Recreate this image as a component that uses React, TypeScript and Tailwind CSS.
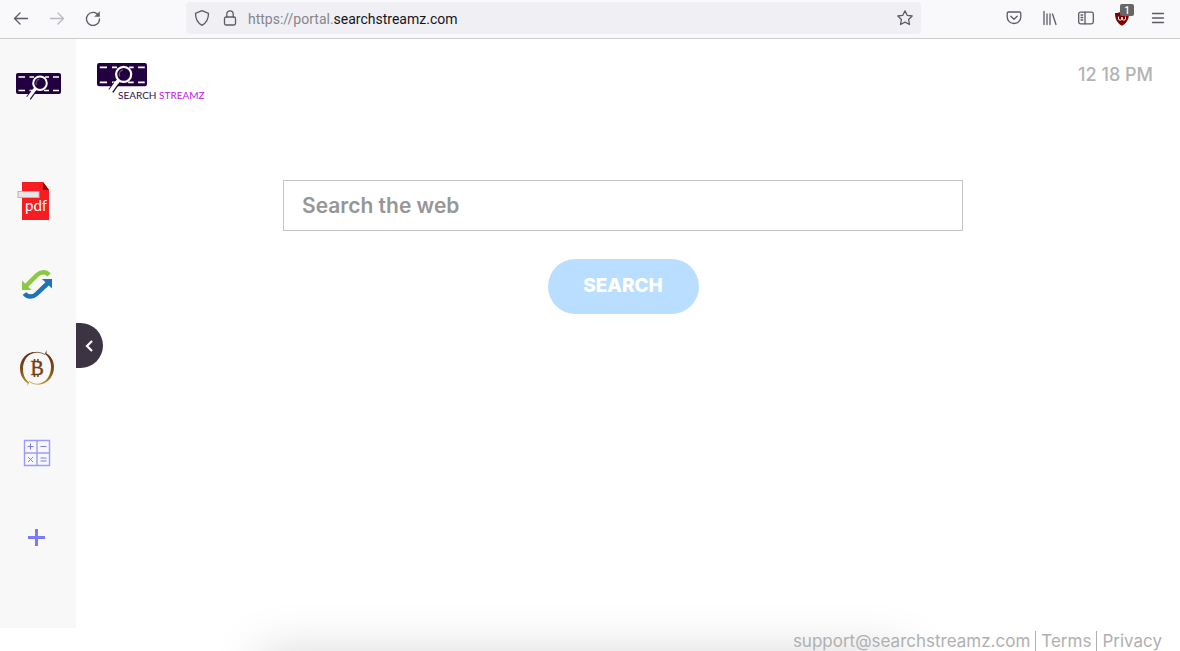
import { useState, type FormEvent, type ReactNode } from "react";

const FilmLogo = ({ className }: { className: string }) => (
  <svg viewBox="0 0 45 27" className={className} aria-hidden="true">
    <rect width="45" height="21" rx="2" fill="#22003f" />
    <path
      d="M2.5 4H9M13.5 4H18M29 4H33M37 4H43M2.5 17.5H9M13.5 17.5H17M28 17.5H33M37 17.5H43"
      stroke="#fff"
      strokeWidth="1.5"
    />
    <path d="M17 19L12.5 25.2" stroke="#22003f" strokeWidth="5.4" />
    <path d="M20.5 14.5L17.5 18L11.5 26.2" stroke="#fff" strokeWidth="3.4" fill="none" />
    <circle cx="24" cy="10.2" r="6.8" fill="#22003f" stroke="#fff" strokeWidth="2" />
    <path d="M20.3 12C19.5 9 21.2 6.8 23.3 6.2" stroke="#6d5585" strokeWidth="1.2" fill="none" />
  </svg>
);

const PdfIcon = () => (
  <svg viewBox="0 0 40 40" className="size-10">
    <path d="M5 1H26L32 9V39H5Z" fill="#f71b22" />
    <path d="M26 1V9H32Z" fill="#8f0508" />
    <rect x="1" y="10.5" width="21" height="6" fill="#e6e6e6" stroke="#d9a7aa" strokeWidth="1" />
    <text x="8" y="30" fill="#fff" fontSize="15" fontFamily="Lato, sans-serif">
      pdf
    </text>
  </svg>
);

const SyncIcon = () => (
  <svg viewBox="0 0 32 34" className="h-[34px] w-8" fill="none">
    <path d="M5 18L16 7C19.500 3.600 25 3.200 28 7" stroke="#8bc941" strokeWidth="4.500" />
    <path d="M1 12.500V22H10.500Z" fill="#8bc941" />
    <path d="M3.500 25.500C6.500 29.600 12 29.400 15.500 26L27 15" stroke="#1d72b8" strokeWidth="4.500" />
    <path d="M21 11H31V20.500Z" fill="#1d72b8" />
  </svg>
);

const BitcoinIcon = () => (
  <svg viewBox="0 0 36 40" className="h-10 w-9">
    <defs>
      <linearGradient id="gold" x1="0" y1="0" x2="0" y2="38" gradientUnits="userSpaceOnUse">
        <stop offset="0" stopColor="#5e2a0e" />
        <stop offset="0.6" stopColor="#84501a" />
        <stop offset="1" stopColor="#c9a520" />
      </linearGradient>
    </defs>
    <path
      fill="url(#gold)"
      d="M18 3C8 2 1 10 1 19C1 26 4 31 8.500 34V37L10 33.500C5.500 30 4 25 4 20C4 11 9 4 18 3ZM18 35.500C28 36 35 28 35 18C35 12 32 7 27.500 4.500V1L26 5C30 8 32 13 32 18C32 27 27 34 18 35.500Z"
    />
    <path d="M10 5.500Q18 1 26 5.500M10 32.500Q18 38 26 32.500" stroke="url(#gold)" strokeWidth="0.700" fill="none" />
    <text x="11.500" y="25.500" fontSize="20" fontFamily="Liberation Serif, serif" fill="#763c14" stroke="#763c14" strokeWidth="0.400">
      B
    </text>
    <path d="M15.500 10V13M19 10V13M15.500 25.500V28M19 25.500V28" stroke="#763c14" strokeWidth="1.500" />
  </svg>
);

const CalculatorIcon = () => (
  <svg viewBox="0 0 28 28" className="size-7" fill="none" stroke="#7c7cf0">
    <path d="M1.500 1.500H26.500V26.500H1.500ZM14 1V27M1 14H27" stroke="#9c9cf7" strokeWidth="1.400" />
    <path d="M4.500 7.500H10.500M7.500 4.500V10.500M17.500 7.500H23.500M5 18L10 23M10 18L5 23M17.500 19H23.500M17.500 22H23.500" />
  </svg>
);

const PlusIcon = () => (
  <svg viewBox="0 0 17 17" className="size-[17px]">
    <path d="M8.500 0V17M0 8.500H17" stroke="#7b7bfa" strokeWidth="3" />
  </svg>
);

const ToolButton = ({ label, children, dim }: { label: string; children: ReactNode; dim?: boolean }) => (
  <button
    type="button"
    aria-label={label}
    className={
      dim
        ? "flex size-5 items-center justify-center text-[#b9b9c0]"
        : "flex size-5 items-center justify-center text-[#5b5b66]"
    }
  >
    <svg
      viewBox="0 0 16 16"
      className="size-4"
      fill="none"
      stroke="currentColor"
      strokeWidth="1.3"
      strokeLinecap="round"
      strokeLinejoin="round"
    >
      {children}
    </svg>
  </button>
);

const BrowserBar = () => (
  <header className="flex h-[39px] items-center border-b border-[#cccccc] bg-[#f9f9fb] pr-3 pb-0.5 pl-[11px]">
    <nav className="flex w-[175px] shrink-0 gap-4">
      <ToolButton label="Back">
        <path d="M14.500 8.500H1.500M7 3L1.500 8.500L7 14" />
      </ToolButton>
      <ToolButton label="Forward" dim>
        <path d="M1.500 8.500H14.500M9 3L14.500 8.500L9 14" />
      </ToolButton>
      <ToolButton label="Reload">
        <path d="M13.500 5.500A6.500 6.500 0 1 0 14.500 9" />
        <path d="M14.500 2V6.500H10Z" fill="currentColor" strokeWidth="0.5" />
      </ToolButton>
    </nav>
    <div className="flex h-8 w-[735px] min-w-0 items-center rounded bg-[#f0f0f4] px-1.5">
      <ToolButton label="Tracking protection">
        <path d="M8 .7L14.500 3.300C14.500 9 12.500 13 8 15.300C3.500 13 1.500 9 1.500 3.300Z" />
      </ToolButton>
      <div className="ml-2 flex">
        <ToolButton label="Site information">
          <rect x="2.500" y="7" width="11" height="8" rx="1.500" />
          <path d="M4.800 7V4A3.200 3.200 0 0 1 11.200 4V7" />
        </ToolButton>
      </div>
      <p className="ml-2 min-w-0 flex-1 truncate pt-0.5 font-['Roboto',sans-serif] text-sm text-[#85858c]">
        https://portal.<span className="text-[#15141a]">searchstreamz.com</span>
      </p>
      <ToolButton label="Bookmark this page">
        <path d="M8 .9L10.200 5.300L15.200 6L11.600 9.500L12.500 14.500L8 12.200L3.500 14.500L4.400 9.500L.8 6L5.800 5.300Z" />
      </ToolButton>
    </div>
    <div className="ml-auto flex gap-4">
      <ToolButton label="Pocket">
        <path d="M2.500 2H13.500C14.300 2 14.800 2.500 14.800 3.300V7A6.800 6.500 0 0 1 1.200 7V3.300C1.200 2.500 1.700 2 2.500 2ZM4.800 6.200L8 9.200L11.200 6.200" />
      </ToolButton>
      <ToolButton label="Library">
        <path d="M2 1.500V14.500M5 4V14.500M8 4V14.500M10.500 4L14 14.500" />
      </ToolButton>
      <ToolButton label="Sidebars">
        <rect x=".7" y="2.200" width="14.600" height="11.600" rx="1.800" />
        <path d="M7 2.200V13.800M3 5H4.700M3 7.500H4.700M3 10H4.700" />
      </ToolButton>
      <div className="relative">
        <ToolButton label="uBlock Origin">
          <path d="M8 1C10 2.500 12 3 15 3C15 9 13 13 8 15.800C3 13 1 9 1 3C4 3 6 2.500 8 1Z" fill="#800000" stroke="none" />
          <path d="M4.500 7V9C4.500 10.500 8 10.500 8 9V7V9C8 10.500 11.500 10.500 11.500 9V7" stroke="#fff" strokeWidth="1" />
        </ToolButton>
        <span className="absolute -top-1 left-2 flex h-3 w-3.5 items-center justify-center rounded-xs bg-[#666666] font-['Roboto',sans-serif] text-[10px] font-medium text-white">
          1
        </span>
      </div>
      <ToolButton label="Menu">
        <path d="M2.500 3.500H13.500M2.500 8H13.500M2.500 12.500H13.500" />
      </ToolButton>
    </div>
  </header>
);

const apps = [
  { name: "PDF converter", icon: <PdfIcon /> },
  { name: "File sync", icon: <SyncIcon /> },
  { name: "Bitcoin", icon: <BitcoinIcon /> },
  { name: "Calculator", icon: <CalculatorIcon /> },
  { name: "Add app", icon: <PlusIcon /> },
];

export default function App() {
  const [query, setQuery] = useState("");
  const [open, setOpen] = useState(true);

  const handleSearch = (e: FormEvent) => {
    e.preventDefault();
  };

  return (
    <div className="relative flex min-h-screen flex-col overflow-hidden bg-white font-['Inter',sans-serif]">
      <BrowserBar />

      <div className="flex flex-1">
        {open && (
          <aside className="w-[76px] shrink-0 bg-[#f8f8f8] pt-[34px] pr-[3px]">
            <a href="#home" aria-label="Home" className="flex justify-center pl-1">
              <FilmLogo className="h-[27px] w-[45px]" />
            </a>
            <ul className="mt-[59px]">
              {apps.map((app) => (
                <li key={app.name}>
                  <a href="#app" aria-label={app.name} className="flex h-[84px] items-center justify-center">
                    {app.icon}
                  </a>
                </li>
              ))}
            </ul>
          </aside>
        )}

        <main className="relative min-w-0 flex-1 pr-2.5">
          <div className="flex items-start justify-between pt-6 pr-[17px] pl-[21px]">
            <a href="#home" className="block">
              <FilmLogo className="h-[30px] w-[50px]" />
              <span className="-mt-1 ml-[21px] block font-['Lato',sans-serif] text-[10px] leading-3 text-[#2c1250]">
                SEARCH <span className="text-[#bf16ee]">STREAMZ</span>
              </span>
            </a>
            <time className="text-lg leading-6 font-medium text-[#b3b3b3]">12 18 PM</time>
          </div>

          <form onSubmit={handleSearch} className="mx-auto mt-[79px] flex max-w-[680px] flex-col items-center gap-7">
            <input
              type="text"
              aria-label="Search the web"
              placeholder="Search the web"
              value={query}
              onChange={(e) => setQuery(e.target.value)}
              className="h-[51px] w-full border border-[#c4c4c4] px-[18px] text-[21px] font-semibold text-gray-700 outline-none placeholder:text-[#969696]"
            />
            <button
              type="submit"
              className="h-[55px] w-[151px] rounded-full bg-[#badeff] text-[19px] font-extrabold text-white"
            >
              SEARCH
            </button>
          </form>

          <button
            type="button"
            aria-label="Toggle sidebar"
            onClick={() => setOpen(!open)}
            className="absolute top-[284px] left-0 flex h-[45px] w-[27px] items-center justify-center rounded-r-full bg-[#3d3443] pr-0.5"
          >
            <svg viewBox="0 0 8 12" className="h-3 w-2" fill="none" stroke="#fff" strokeWidth="2.2">
              <path d="M7 1L2 6L7 11" />
            </svg>
          </button>
        </main>
      </div>

      {/* soft shadow rising from the bottom edge */}
      <div className="pointer-events-none absolute top-full left-[22%] h-20 w-[55%] shadow-[0_0_50px_rgba(0,0,0,0.15)]" />

      <footer className="relative flex h-[23px] items-end justify-end gap-[5px] pr-[18px] text-[17px] leading-5 text-[#b0b0b0]">
        <a href="mailto:support@searchstreamz.com">support@searchstreamz.com</a>
        <a href="#terms" className="border-x border-[#b0b0b0] px-[5px]">
          Terms
        </a>
        <a href="#privacy">Privacy</a>
      </footer>
    </div>
  );
}
